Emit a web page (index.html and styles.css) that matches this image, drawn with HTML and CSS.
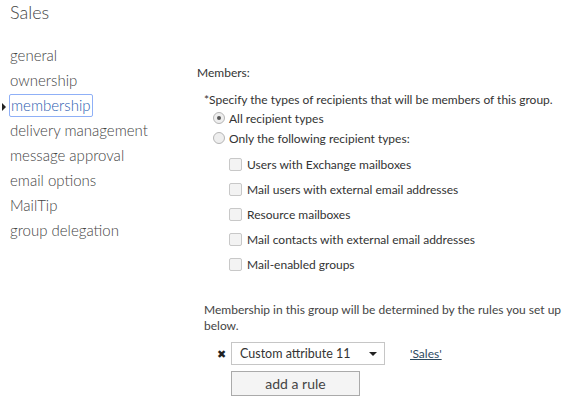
FILE: index.html
```html
<!DOCTYPE html>
<html lang="en">
<head>
    <meta charset="UTF-8">
    <title>Sales</title>
    <link rel="stylesheet" href="styles.css">
</head>
<body>
    <h1 class="title">Sales</h1>
    <div class="page">
        <ul class="nav">
            <li>general</li>
            <li>ownership</li>
            <li class="active"><span class="focus">membership</span></li>
            <li>delivery management</li>
            <li>message approval</li>
            <li>email options</li>
            <li>MailTip</li>
            <li>group delegation</li>
        </ul>

        <div class="main">
            <div class="label">Members:</div>
            <div class="group">
                <div class="hint">*Specify the types of recipients that will be members of this group.</div>
                <div class="radio-row"><span class="radio checked"></span>All recipient types</div>
                <div class="radio-row"><span class="radio"></span>Only the following recipient types:</div>
                <div class="checks">
                    <div class="check-row"><span class="box"></span>Users with Exchange mailboxes</div>
                    <div class="check-row"><span class="box"></span>Mail users with external email addresses</div>
                    <div class="check-row"><span class="box"></span>Resource mailboxes</div>
                    <div class="check-row"><span class="box"></span>Mail contacts with external email addresses</div>
                    <div class="check-row"><span class="box"></span>Mail-enabled groups</div>
                </div>

                <p class="rules-text">Membership in this group will be determined by the rules you set up below.</p>
                <div class="rule">
                    <span class="remove">&#10006;</span>
                    <div class="select">Custom attribute 11<span class="caret"></span></div>
                    <a class="value" href="#">'Sales'</a>
                </div>
                <button class="add">add a rule</button>
            </div>
        </div>
    </div>
</body>
</html>
```

FILE: styles.css
```css
body {
    margin: 0;
    font-family: 'Lato', 'Liberation Sans', sans-serif;
    color: #333;
    background: white;
    width: 579px;
    height: 406px;
    overflow: hidden;
}
.title {
    margin: 0;
    padding: 0 0 0 10px;
    height: 45px;
    line-height: 24px;
    font-size: 18px;
    font-weight: 300;
    color: #444;
}
.page {
    display: flex;
}
.nav {
    list-style: none;
    margin: 0;
    padding: 0;
    width: 197px;
    flex: none;
}
.nav li {
    position: relative;
    height: 25px;
    line-height: 20px;
    padding-left: 10px;
    font-size: 15px;
    font-weight: 300;
    color: #444;
}
.nav li.active {
    color: #2a5db0;
}
.nav li.active::before {
    content: "";
    position: absolute;
    left: 2px;
    top: 8px;
    border-left: 4px solid #222;
    border-top: 4px solid transparent;
    border-bottom: 4px solid transparent;
}
.focus {
    margin-left: -1px;
    padding: 1px 1px 2px 1px;
    border: 1px solid #8fb0f7;
    border-radius: 2px;
}
.main {
    flex: 1;
    font-size: 12px;
    padding-top: 20px;
}
.label {
    line-height: 16px;
}
.group {
    padding-left: 7px;
    padding-right: 8px;
}
.hint {
    margin-top: 11px;
    line-height: 16px;
}
.radio-row {
    display: flex;
    align-items: center;
    height: 20px;
    padding-left: 9px;
}
.radio {
    width: 10px;
    height: 10px;
    border: 1px solid #b5b5b5;
    border-radius: 50%;
    background: #eee;
    margin-right: 4px;
    position: relative;
}
.radio.checked::after {
    content: "";
    position: absolute;
    left: 3px;
    top: 3px;
    width: 4px;
    height: 4px;
    border-radius: 50%;
    background: #555;
}
.checks {
    padding-left: 25px;
    margin-top: 4px;
}
.check-row {
    display: flex;
    align-items: center;
    height: 25px;
}
.box {
    width: 11px;
    height: 11px;
    border: 1px solid #c8c8c8;
    border-radius: 2px;
    background: #f3f3f3;
    margin-right: 5px;
}
.rules-text {
    margin: 25px 0 8px 0;
    line-height: 16px;
    color: #444;
}
.rule {
    display: flex;
    align-items: center;
    padding-left: 13px;
}
.remove {
    font-size: 11px;
    width: 14px;
    color: #222;
}
.select {
    position: relative;
    width: 144px;
    height: 21px;
    line-height: 21px;
    padding-left: 8px;
    border: 1px solid #c6c6c6;
    font-size: 12.5px;
    color: #333;
}
.caret {
    position: absolute;
    right: 7px;
    top: 9px;
    border-top: 4px solid #222;
    border-left: 4px solid transparent;
    border-right: 4px solid transparent;
}
.value {
    margin-left: 25px;
    color: #2d4a5f;
    font-size: 12px;
}
.add {
    display: block;
    margin: 6px 0 0 27px;
    width: 129px;
    height: 25px;
    border: 1px solid #aaa;
    background: #f4f4f4;
    font-family: inherit;
    font-size: 14px;
    color: #444;
    padding: 0;
}
```
